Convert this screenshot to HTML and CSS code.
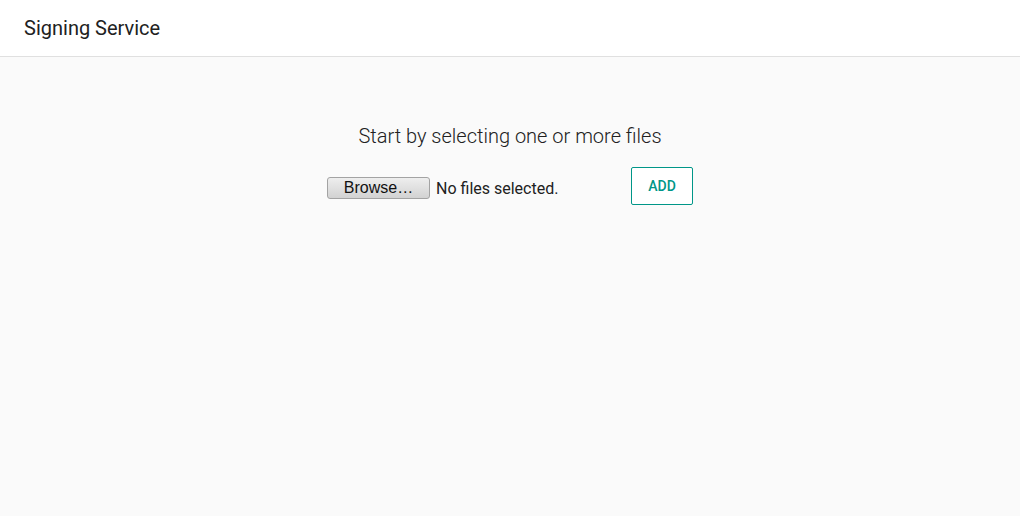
FILE: index.html
```html
<!DOCTYPE html>
<html>
<head>
<meta charset="utf-8">
<link rel="stylesheet" href="styles.css">
</head>
<body>
<header class="topbar"><span class="title">Signing Service</span></header>
<main class="content">
  <h2 class="lead">Start by selecting one or more files</h2>
  <div class="row">
    <div class="file">
      <span class="browse">Browse…</span>
      <span class="status">No files selected.</span>
    </div>
    <button class="add">ADD</button>
  </div>
</main>
</body>
</html>
```
FILE: styles.css
```css
html, body {
  margin: 0;
  padding: 0;
  height: 100%;
}
body {
  background: #fafafa;
  font-family: Roboto, "Liberation Sans", sans-serif;
  color: #212121;
}
.topbar {
  height: 57px;
  background: #fff;
  border-bottom: 1px solid #e0e0e0;
  box-sizing: border-box;
  display: flex;
  align-items: center;
  padding: 0 24px;
}
.title {
  font-size: 20px;
  font-weight: 400;
  color: #212121;
}
.content {
  display: flex;
  flex-direction: column;
  align-items: center;
  padding-top: 67px;
}
.lead {
  margin: 0;
  font-size: 20px;
  font-weight: 300;
  line-height: 24px;
  color: #212121;
}
.row {
  display: flex;
  align-items: center;
  margin-top: 19px;
  gap: 8px;
}
.file {
  width: 296px;
  display: flex;
  align-items: center;
  margin-top: 4px;
}
.browse {
  box-sizing: border-box;
  width: 103px;
  height: 22px;
  border: 1px solid #a3a3a3;
  border-radius: 3px;
  background: linear-gradient(#eeeeee, #d2d2d2);
  font-family: "Liberation Sans", Arial, sans-serif;
  font-size: 16px;
  line-height: 20px;
  text-align: center;
  color: #111;
}
.status {
  margin-left: 6px;
  font-size: 16px;
  color: #212121;
}
.add {
  box-sizing: border-box;
  width: 62px;
  height: 38px;
  background: #fff;
  border: 1px solid #009688;
  border-radius: 2px;
  color: #009688;
  font-family: Roboto, sans-serif;
  font-weight: 500;
  font-size: 14px;
  padding: 0;
}
```
